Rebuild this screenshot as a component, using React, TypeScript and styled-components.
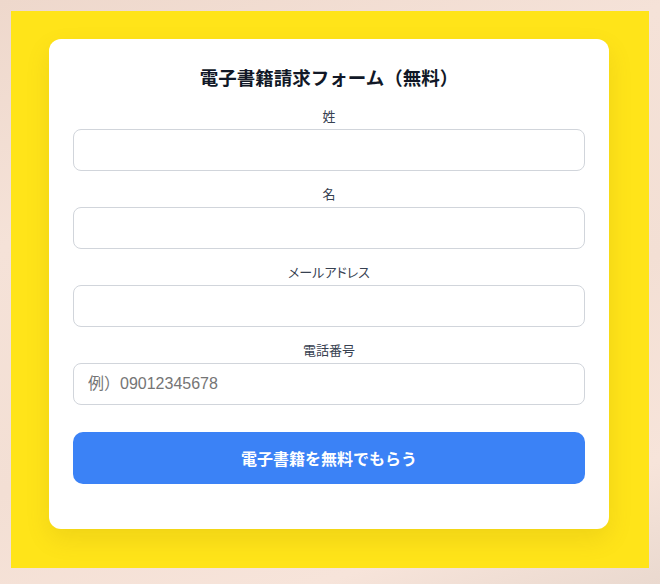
import styled, { createGlobalStyle } from "styled-components";

const GlobalStyle = createGlobalStyle`
  html, body {
    margin: 0;
    padding: 0;
  }
  body {
    font-family: "Noto Sans CJK JP", "Noto Sans", sans-serif;
    background: linear-gradient(160deg, #eed8cc 0%, #f5e2d8 30%, #f3dfd4 60%, #f7e4da 85%, #ead9cf 100%);
    min-height: 584px;
  }
`;

const fields = [
  { label: "姓", name: "lastName", placeholder: "" },
  { label: "名", name: "firstName", placeholder: "" },
  { label: "メールアドレス", name: "email", placeholder: "" },
  { label: "電話番号", name: "tel", placeholder: "例）09012345678" },
];

export default function App() {
  return (
    <>
      <GlobalStyle />
      <Page>
        <Section>
          <Card>
            <Title>電子書籍請求フォーム（無料）</Title>
            <Form onSubmit={(e) => e.preventDefault()}>
              {fields.map((f) => (
                <Field key={f.name}>
                  <Label htmlFor={f.name}>{f.label}</Label>
                  <Input id={f.name} name={f.name} placeholder={f.placeholder} />
                </Field>
              ))}
              <SubmitButton type="submit">電子書籍を無料でもらう</SubmitButton>
            </Form>
          </Card>
        </Section>
      </Page>
    </>
  );
}

const Page = styled.div`
  padding: 11px 11px 16px;
`;

const Section = styled.section`
  background: #ffe419;
  padding: 28px 40px 39px 38px;
`;

const Card = styled.div`
  background: #ffffff;
  border-radius: 12px;
  padding: 24px 24px 45px;
  box-shadow: 0 10px 25px rgba(120, 90, 0, 0.12);
`;

const Title = styled.h2`
  margin: 0 0 17px;
  text-align: center;
  font-size: 18.5px;
  line-height: 28px;
  font-weight: 700;
  color: #111827;
`;

const Form = styled.form`
  display: flex;
  flex-direction: column;
  gap: 15px;
`;

const Field = styled.div`
  display: flex;
  flex-direction: column;
  gap: 5px;
`;

const Label = styled.label`
  text-align: center;
  font-size: 13px;
  line-height: 16px;
  color: #374151;
  font-feature-settings: "palt";
`;

const Input = styled.input`
  box-sizing: border-box;
  width: 100%;
  height: 42px;
  padding: 0 14px;
  border: 1px solid #d1d5db;
  border-radius: 8px;
  font-family: "Liberation Sans", "Noto Sans CJK JP", sans-serif;
  font-size: 16px;
  color: #111827;
  background: #ffffff;
  outline: none;

  &::placeholder {
    color: #757575;
  }
`;

const SubmitButton = styled.button`
  margin-top: 12px;
  height: 52px;
  border: none;
  border-radius: 10px;
  background: #3b82f6;
  color: #ffffff;
  font-family: "Noto Sans CJK JP", sans-serif;
  font-size: 16px;
  font-weight: 700;
  cursor: pointer;
`;
